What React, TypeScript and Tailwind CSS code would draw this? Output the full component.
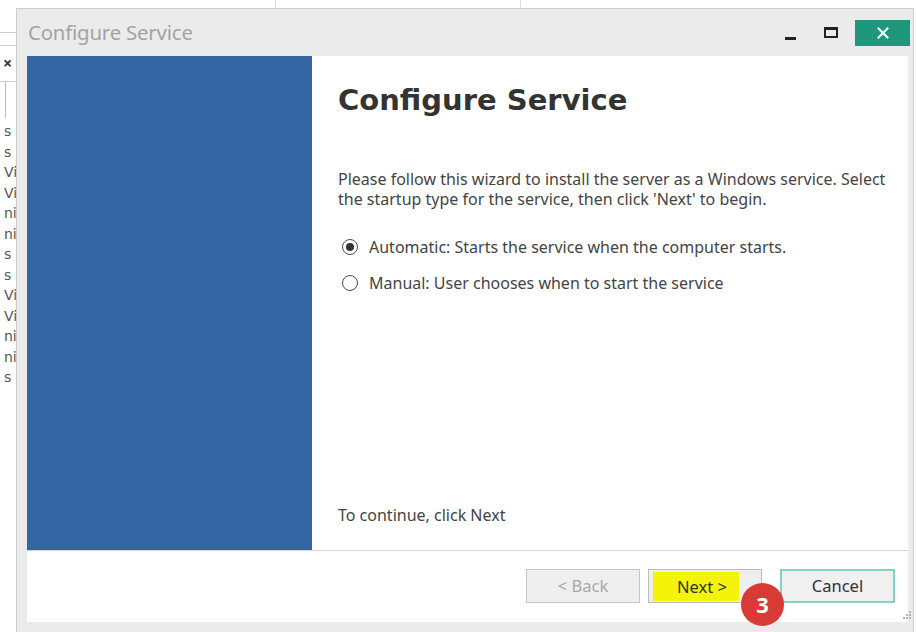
import React from "react";

const sideLetters = ["s", "s", "Vi", "Vi", "ni", "ni", "s", "s", "Vi", "Vi", "ni", "ni", "s"];

function Radio({ checked, label }: { checked?: boolean; label: string }) {
  return (
    <label className="flex items-center gap-[11px] h-[20px]">
      <span className="ml-[4px] w-[16px] h-[16px] rounded-full border-[1.5px] border-[#4a4a4a] bg-white flex items-center justify-center">
        {checked && <span className="w-[8px] h-[8px] rounded-full bg-[#333]" />}
      </span>
      <span>{label}</span>
    </label>
  );
}

export default function App() {
  return (
    <div
      className="w-[916px] h-[632px] overflow-hidden bg-white flex flex-col"
      style={{ fontFamily: '"Noto Sans", "Open Sans", sans-serif' }}
    >
      {/* window behind the dialog */}
      <div className="h-[8px] flex shrink-0">
        <div className="w-[276px] border-r border-[#dcdcdc]" />
        <div className="w-[245px] border-r border-[#dcdcdc]" />
      </div>

      <div className="flex flex-1 min-h-0">
        <div className="w-[16px] shrink-0 flex flex-col text-[#555] text-[14px] leading-[20.5px]">
          <div className="h-[25px] shrink-0 border-b border-[#cfcfcf]" />
          <div className="h-[13px] shrink-0 border-b border-[#cfcfcf]" />
          <div className="h-[34px] shrink-0 flex items-center pl-[3px] text-[#333] text-[16px] font-bold">×</div>
          <div className="h-[2px] shrink-0 border-b border-[#cfcfcf]" />
          <div className="h-[36px] shrink-0 ml-[5px] border-l border-[#bbb]" />
          <div className="flex flex-col pl-[4px] pt-[3px]" style={{ fontFamily: '"DejaVu Sans", sans-serif' }}>
            {sideLetters.map((l, i) => (
              <span key={i} className="h-[20.5px] overflow-hidden">{l}</span>
            ))}
          </div>
        </div>

        {/* dialog */}
        <div className="flex-1 mr-[2px] bg-[#ebebeb] border-t border-l border-r border-[#cdcdcd] flex flex-col">
          <div className="h-[47px] shrink-0 flex items-center pl-[11px] pr-[3px]">
            <span className="text-[20.4px] text-[#a3a3a3] tracking-[-0.2px]">Configure Service</span>
            <div className="ml-auto flex items-center h-full">
              <div className="w-[11px] h-[3px] bg-[#222] mt-[11px] mr-[28px]" />
              <div className="w-[14px] h-[11px] border-[2px] border-[#222] border-t-[3px] mr-[17px]" />
              <button className="w-[55px] h-[26px] bg-[#1f977d] flex items-center justify-center">
                <svg width="12" height="12" viewBox="0 0 12 12">
                  <path d="M1.5 1.5 L10.5 10.5 M10.5 1.5 L1.5 10.5" stroke="#fff" strokeWidth="2" strokeLinecap="square" />
                </svg>
              </button>
            </div>
          </div>

          <div className="ml-[10px] mr-[5px] flex-1 flex flex-col bg-white">
            <div className="h-[495px] shrink-0 flex border-b border-[#d4d4d4]">
              <div className="w-[285px] bg-[#3466a3]" />
              <div className="flex-1 flex flex-col pl-[26px] pr-[6px] text-[#444]">
                <h1
                  className="mt-[25px] text-[29px] font-bold text-[#333] leading-[38px]"
                  style={{ fontFamily: '"DejaVu Sans", Verdana, sans-serif' }}
                >
                  Configure Service
                </h1>
                <p className="mt-[50px] text-[16px] leading-[20px] whitespace-nowrap">
                  Please follow this wizard to install the server as a Windows service. Select
                  <br />
                  the startup type for the service, then click 'Next' to begin.
                </p>
                <div className="mt-[28px] flex flex-col gap-[16px] text-[16px]">
                  <Radio checked label="Automatic: Starts the service when the computer starts." />
                  <Radio label="Manual: User chooses when to start the service" />
                </div>
                <p className="mt-auto mb-[23px] text-[16px]">To continue, click Next</p>
              </div>
            </div>

            <div className="relative flex-1 flex items-start justify-end pt-[18px] pr-[13px] text-[16.5px]">
              <button className="w-[114px] h-[34px] bg-[#efefef] border border-[#c6c6c6] text-[#a9a9a9]">
                &lt; Back
              </button>
              <div className="relative ml-[8px]">
                <button className="w-[114px] h-[34px] bg-[#eeeeee] border border-[#bcbcbc] text-[#333] flex items-center justify-center">
                  <span className="bg-[#f4f40a] pl-[24px] pr-[12px] py-[2px] -ml-[18px] leading-[25px]">Next &gt;</span>
                </button>
                <span className="absolute left-[93px] top-[14px] w-[43px] h-[43px] rounded-full bg-[#d83a35] text-white text-[22px] font-bold flex items-center justify-center">
                  3
                </span>
              </div>
              <button className="ml-[18px] w-[115px] h-[34px] bg-[#f0f0f0] border-[2px] border-[#7fd2c5] text-[#333]">
                Cancel
              </button>
              {/* resize grip */}
              <svg className="absolute right-[-4px] bottom-[2px]" width="9" height="9" viewBox="0 0 9 9">
                <rect x="6" y="0" width="2" height="2" fill="#b5b5b5" />
                <rect x="3" y="3" width="2" height="2" fill="#b5b5b5" />
                <rect x="6" y="3" width="2" height="2" fill="#b5b5b5" />
                <rect x="0" y="6" width="2" height="2" fill="#b5b5b5" />
                <rect x="3" y="6" width="2" height="2" fill="#b5b5b5" />
                <rect x="6" y="6" width="2" height="2" fill="#b5b5b5" />
              </svg>
            </div>
          </div>
          <div className="h-[10px] shrink-0" />
        </div>
      </div>
    </div>
  );
}
